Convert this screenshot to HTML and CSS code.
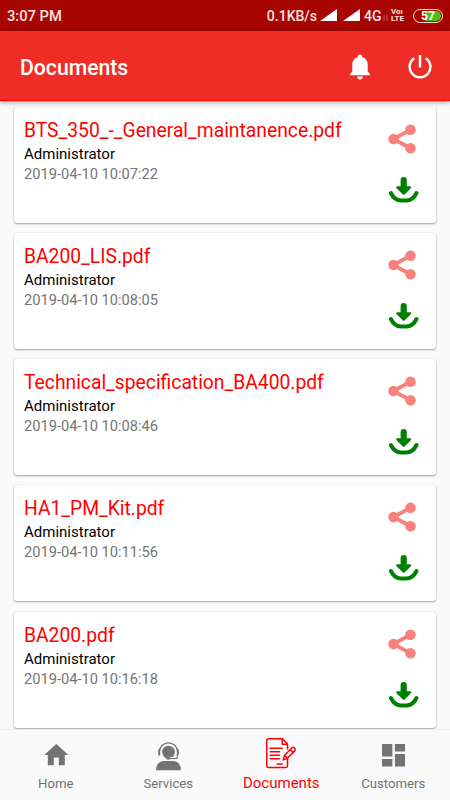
FILE: index.html
```
<!DOCTYPE html>
<html lang="en">
<head>
<meta charset="utf-8">
<title>Documents</title>
<link rel="stylesheet" href="styles.css">
</head>
<body>
<svg width="0" height="0" class="defs">
  <symbol id="share" viewBox="0 0 32 32">
    <path d="M22.5 6.8 5.3 16l17.2 9.2" fill="none" stroke="currentColor" stroke-width="3.8"/>
    <circle cx="5.5" cy="16" r="5.2"/><circle cx="22.5" cy="6.8" r="5.300"/><circle cx="22.5" cy="25.2" r="5.300"/>
  </symbol>
  <symbol id="download" viewBox="0 0 32 28">
    <path d="M12.600 4a3.100 3.100 0 0 1 6.200 0V10.200h3.200c1.300 0 1.600 1.200.8 2l-6 6.100c-.7.7-1.500.7-2.200 0l-6-6.100c-.8-.8-.5-2 .8-2h3.200z"/>
    <path d="M2.900 17C5.500 22.300 9 24.400 12.800 24.400h5.800c3.800 0 7.300-2.100 9.900-7.400" fill="none" stroke="currentColor" stroke-width="4" stroke-linecap="round"/>
  </symbol>
</svg>
<div class="app">
  <div class="status">
    <span class="time">3:07 PM</span>
    <span class="speed">0.1KB/s</span>
    <svg class="signal" width="17" height="12" viewBox="0 0 17 12"><path d="M0 12 17 0v12z"/></svg>
    <svg class="signal second" width="17" height="12" viewBox="0 0 17 12"><path d="M0 12 17 0v12z"/></svg>
    <span class="net">4G</span>
    <svg class="arrows" width="5" height="6" viewBox="0 0 5 6"><path d="M1 0v6M4 0v6" stroke="currentColor" stroke-width="1"/></svg>
    <span class="volte"><span>Voı</span><span>LTE</span></span>
    <span class="battery"><span>57</span></span>
  </div>
  <header class="bar">
    <h1>Documents</h1>
    <svg class="bell" width="20" height="26" viewBox="0 0 20 26"><path d="M10 .5c-1.300 0-2.100.8-2.100 2v.6C4.500 4 2.300 7 2.300 10.500v7L0 20v1.300h20V20l-2.300-2.500v-7C17.700 7 15.500 4 12.100 3.100v-.6c0-1.200-.8-2-2.100-2zM7.200 22.600a2.800 2.800 0 0 0 5.600 0z"/></svg>
    <svg class="power" width="24" height="24" viewBox="0 0 24 24"><path d="M12 0v12.500M6.300 3.200a10.400 10.400 0 1 0 11.400 0" fill="none" stroke="currentColor" stroke-width="2.500"/></svg>
  </header>
  <main class="list">
    <article class="card"><div class="info"><h2>BTS_350_-_General_maintanence.pdf</h2><p>Administrator</p><time>2019-04-10 10:07:22</time></div><div class="actions"><svg class="share"><use href="#share"/></svg><svg class="download"><use href="#download"/></svg></div></article>
    <article class="card"><div class="info"><h2>BA200_LIS.pdf</h2><p>Administrator</p><time>2019-04-10 10:08:05</time></div><div class="actions"><svg class="share"><use href="#share"/></svg><svg class="download"><use href="#download"/></svg></div></article>
    <article class="card"><div class="info"><h2>Technical_specification_BA400.pdf</h2><p>Administrator</p><time>2019-04-10 10:08:46</time></div><div class="actions"><svg class="share"><use href="#share"/></svg><svg class="download"><use href="#download"/></svg></div></article>
    <article class="card"><div class="info"><h2>HA1_PM_Kit.pdf</h2><p>Administrator</p><time>2019-04-10 10:11:56</time></div><div class="actions"><svg class="share"><use href="#share"/></svg><svg class="download"><use href="#download"/></svg></div></article>
    <article class="card"><div class="info"><h2>BA200.pdf</h2><p>Administrator</p><time>2019-04-10 10:16:18</time></div><div class="actions"><svg class="share"><use href="#share"/></svg><svg class="download"><use href="#download"/></svg></div></article>
  </main>
  <nav class="tabs">
    <a class="tab"><svg width="32" height="32" viewBox="0 0 32 32"><path d="M16.300 4 28.400 15h-3.600v10.200h-6v-7.600h-5v7.600h-6V15H4.200z"/></svg><span>Home</span></a>
    <a class="tab"><svg width="32" height="32" viewBox="0 0 32 32">
      <circle cx="16.500" cy="12.100" r="6.400"/><path d="M4 30.200c0-5.600 3.300-9 8-9.200h9c4.700.2 8 3.600 8 9.200z"/>
      <path d="M7.200 11.500a9.400 10.200 0 0 1 18.600 0" fill="none" stroke="currentColor" stroke-width="1.300"/>
      <path d="M7.200 9.500v6M25.800 9.500v6" stroke="currentColor" stroke-width="2"/>
      <path d="M25.300 15v3.500h-8" fill="none" stroke="#fafafa" stroke-width="3"/>
      <path d="M25.200 15v3.500H16" fill="none" stroke="currentColor" stroke-width="1.100"/><path d="M14.500 18.500h4" stroke="currentColor" stroke-width="2"/>
    </svg><span>Services</span></a>
    <a class="tab active"><svg width="32" height="32" viewBox="0 0 32 32" fill="none" stroke="currentColor" stroke-width="1.500" stroke-linejoin="round" stroke-linecap="round">
      <path d="M22.500 20.500v7.200c0 1-.7 1.700-1.700 1.700H3.500c-1 0-1.700-.7-1.700-1.700V2.500c0-1 .7-1.700 1.700-1.700h13.900l5.100 5.200v5"/>
      <path d="M17.200 1v5.300h5.200M5.200 10.200h12M5.200 13.700h9.300M5.200 17.200h9.300M5.200 20.700h9.300M12.200 26.100h5"/>
      <path d="m18.300 21.900 1.300-4.600 7.500-7.600c1.700-1.200 4.100 1.300 2.900 2.900l-7.600 7.700zM19.600 17.300l2.800 3M25.300 11.500l2.900 2.900"/>
    </svg><span>Documents</span></a>
    <a class="tab"><svg width="32" height="32" viewBox="0 0 32 32"><path d="M5 4h10.400v12.500H5zM17.900 4H28v7.500H17.900zM5 19h10.400v7.500H5zM17.900 14H28v12.500H17.900z"/></svg><span>Customers</span></a>
  </nav>
</div>
</body>
</html>
```
FILE: styles.css
```
* { box-sizing: border-box; }
body { margin: 0; font-family: Roboto, "Liberation Sans", sans-serif; background: #fafafa; }
svg { fill: currentColor; flex: none; display: block; }
svg[fill="none"] { fill: none; }
h1, h2, p { margin: 0; font-weight: 400; }
.defs { position: absolute; }
.app { width: 450px; height: 800px; display: flex; flex-direction: column; overflow: hidden; }
.status { height: 31px; flex: none; background: #a80500; color: #ffe3e1; display: flex; align-items: center; padding: 1px 7px 0 7px; font-size: 14.700px; font-weight: 500; }
.time { margin-right: auto; }
.speed { margin-right: 3px; font-size: 14px; }
.signal { color: #fff; margin-top: -2px; }
.second { margin: -2px 4px 0 6px; }
.net { width: 18px; font-size: 14px; }
.arrows { color: #c8605c; margin: 4px 3px 0 1px; }
.volte { display: flex; flex-direction: column; font-size: 8px; width: 15px; margin: -2px 7px 0 0; }
.volte span { height: 7px; line-height: 7px; font-weight: 700; }
.battery { width: 30px; height: 14px; margin-top: -1px; border: 1.500px solid #ffd9d6; border-radius: 7px; padding: 1px; display: flex; }
.battery span { flex: 1; border-radius: 5px; background: linear-gradient(90deg, #a80500 0 40%, #50bd1b 40%); color: #fff; text-align: center; font-size: 12px; line-height: 10px; font-weight: 700; }
.bar { height: 70px; flex: none; background: #ef2d26; border-bottom: 1px solid #f00; color: #fff; display: flex; align-items: center; padding: 2px 18px 0 20px; box-shadow: 0 1px 5px rgba(0,0,0,.45); z-index: 1; }
.bar h1 { font-size: 21.200px; font-weight: 500; margin-right: auto; padding-top: 1px; }
.bell { margin-right: 38px; }
.list { flex: 1; min-height: 0; overflow: hidden; padding: 5.700px 14px 0; display: flex; flex-direction: column; gap: 10.250px; }
.card { height: 116px; flex: none; background: #fff; border-radius: 3px; box-shadow: 0 1px 2px rgba(0,0,0,.34), 0 0 1px rgba(0,0,0,.2); display: flex; padding: 11px 16px 0 10px; }
.info { flex: 1; white-space: nowrap; }
.card h2 { font-size: 19.300px; line-height: 25px; color: #f00; }
.card p { font-size: 15px; line-height: 22px; color: #000; }
.card time { display: block; font-size: 14.650px; line-height: 19px; color: #757575; }
.actions { width: 32px; padding-top: 5px; display: flex; flex-direction: column; gap: 21px; }
.share { width: 32px; height: 32px; color: #f7827d; margin-left: -.5px; }
.download { width: 32px; height: 28px; color: #008000; }
.tabs { height: 71px; flex: none; border-top: 1px solid #ececec; background: #fafafa; display: flex; justify-content: center; z-index: 1; }
.tab { width: 112.500px; display: flex; flex-direction: column; align-items: center; color: #737373; font-size: 13.200px; padding: 10px 1px 0 0; }
.tab span { line-height: 18px; margin-top: 3px; }
.active { color: #f00; font-size: 15px; padding: 8px 0 0; }
.active span { margin-top: 4px; }
```
